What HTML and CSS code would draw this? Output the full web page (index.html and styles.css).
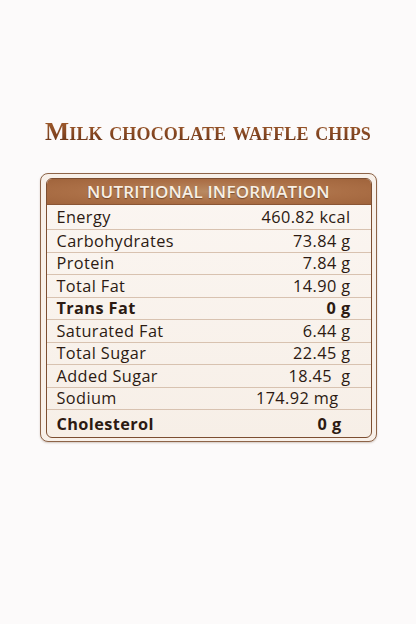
FILE: index.html
```html
<!DOCTYPE html>
<html>
<head>
<meta charset="utf-8">
<link rel="stylesheet" href="styles.css">
</head>
<body>
<main class="page">
  <h1 class="title">Milk chocolate waffle chips</h1>
  <section class="card">
    <div class="panel">
      <div class="head">NUTRITIONAL INFORMATION</div>
      <div class="row first"><span>Energy</span><span>460.82 kcal</span></div>
      <div class="row"><span>Carbohydrates</span><span>73.84 g</span></div>
      <div class="row"><span>Protein</span><span>7.84 g</span></div>
      <div class="row"><span>Total Fat</span><span>14.90 g</span></div>
      <div class="row bold"><span>Trans Fat</span><span>0 g</span></div>
      <div class="row"><span>Saturated Fat</span><span>6.44 g</span></div>
      <div class="row"><span>Total Sugar</span><span>22.45 g</span></div>
      <div class="row"><span>Added Sugar</span><span class="pre">18.45  g</span></div>
      <div class="row inset-lg"><span>Sodium</span><span>174.92 mg</span></div>
      <div class="row bold last inset"><span>Cholesterol</span><span>0 g</span></div>
    </div>
  </section>
</main>
</body>
</html>
```
FILE: styles.css
```css
html, body {
  margin: 0;
  padding: 0;
  background: #fcfafa;
}
.page {
  width: 416px;
  height: 624px;
  padding-top: 116px;
  box-sizing: border-box;
  display: flex;
  flex-direction: column;
  align-items: center;
}
.title {
  margin: 0 0 25px 0;
  font-family: "Liberation Serif", serif;
  font-variant: small-caps;
  font-weight: bold;
  font-size: 25.5px;
  text-transform: lowercase;
  letter-spacing: 0.15px;
  line-height: 32px;
  color: #7a3e1c;
  background: linear-gradient(180deg, #a8622f 0%, #8a4a24 50%, #5a2a10 100%);
  -webkit-background-clip: text;
  background-clip: text;
  -webkit-text-fill-color: transparent;
}
.title::first-letter {
  text-transform: uppercase;
}
.card {
  width: 337px;
  box-sizing: border-box;
  padding: 4px 4px 3px 5px;
  border: 1.5px solid #8d6448;
  border-radius: 8px;
  background: #f8f0e9;
  box-shadow: 0 1px 2px rgba(90, 50, 25, 0.25);
}
.panel {
  border: 1px solid #7c4e31;
  border-radius: 6px;
  overflow: hidden;
  background: linear-gradient(180deg, #fbf6f2 0%, #f7efe7 100%);
  font-family: "Open Sans", sans-serif;
  color: #2c1a12;
}
.head {
  height: 25px;
  display: flex;
  align-items: center;
  justify-content: center;
  background: radial-gradient(ellipse at center, #b98a62 0%, #ab6f46 60%, #a0643c 100%);
  color: #f8efe4;
  font-size: 17px;
  font-weight: 600;
  letter-spacing: 0.2px;
  text-shadow: 0 1px 1px rgba(60, 25, 5, 0.5);
  border-bottom: 1px solid #8a5534;
}
.row {
  height: 22.5px;
  box-sizing: border-box;
  display: flex;
  justify-content: space-between;
  align-items: center;
  padding: 0 20px 0 10px;
  font-size: 16.3px;
  letter-spacing: 0.4px;
  border-top: 1.5px solid #d8c2b0;
}
.row.first {
  height: 24px;
  border-top: none;
}
.row.last {
  height: 28px;
}
.row.bold {
  font-weight: 700;
}
.row.inset {
  padding-right: 29px;
}
.row.inset-lg {
  padding-right: 32px;
}
.pre {
  white-space: pre;
}
```
